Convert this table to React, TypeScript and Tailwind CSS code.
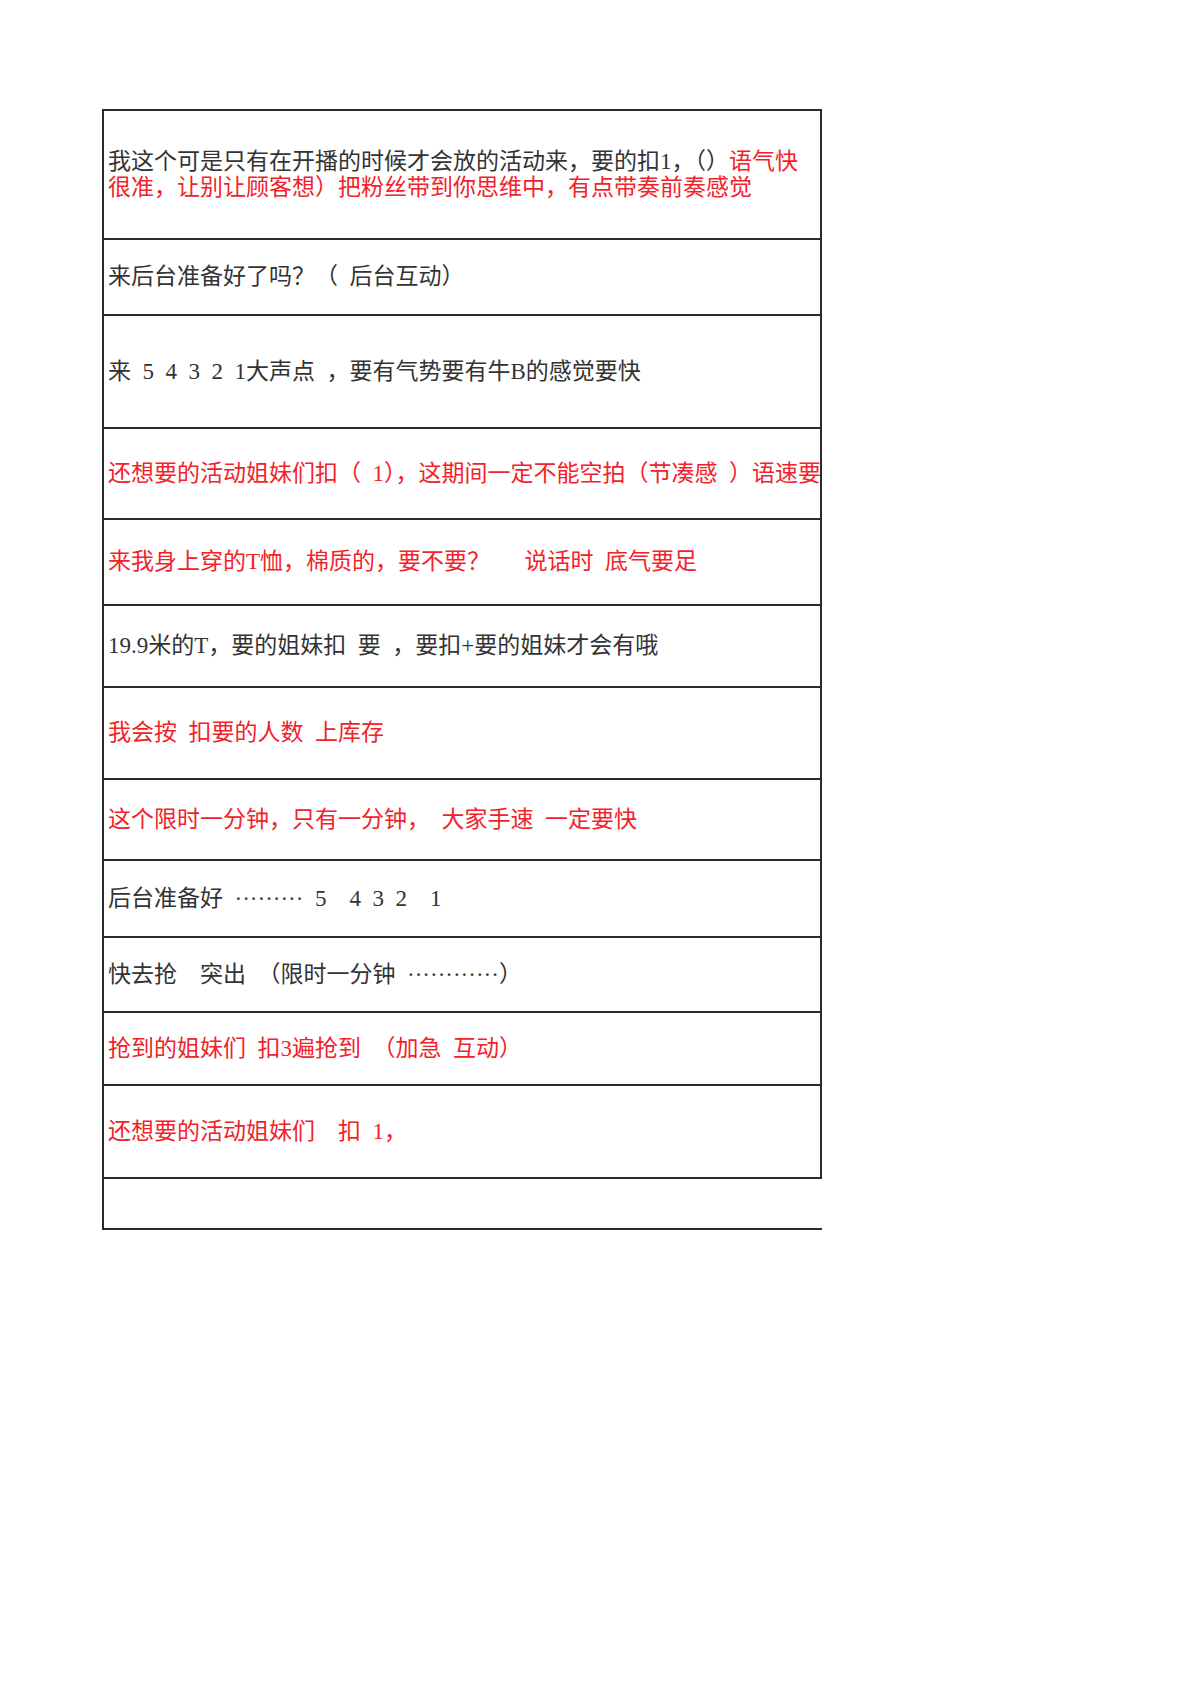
const rows: { h: string; parts: { t: string; red?: boolean }[]; clip?: boolean }[] = [
  {
    h: 'h-[129px]',
    parts: [
      { t: '我这个可是只有在开播的时候才会放的活动来，要的扣1，（）' },
      { t: '语气快很准，让别让顾客想）把粉丝带到你思维中，有点带奏前奏感觉', red: true },
    ],
  },
  { h: 'h-[76px]', parts: [{ t: '来后台准备好了吗？（ 后台互动）' }] },
  { h: 'h-[113px]', parts: [{ t: '来 5 4 3 2 1大声点 ，要有气势要有牛B的感觉要快' }] },
  {
    h: 'h-[91px]',
    clip: true,
    parts: [{ t: '还想要的活动姐妹们扣（ 1），这期间一定不能空拍（节凑感 ）语速要快', red: true }],
  },
  { h: 'h-[86px]', parts: [{ t: '来我身上穿的T恤，棉质的，要不要？   说话时 底气要足', red: true }] },
  { h: 'h-[82px]', parts: [{ t: '19.9米的T，要的姐妹扣 要 ，要扣+要的姐妹才会有哦' }] },
  { h: 'h-[92px]', parts: [{ t: '我会按 扣要的人数 上库存', red: true }] },
  { h: 'h-[81px]', parts: [{ t: '这个限时一分钟，只有一分钟， 大家手速 一定要快', red: true }] },
  { h: 'h-[77px]', parts: [{ t: '后台准备好 ········· 5  4 3 2  1' }] },
  { h: 'h-[75px]', parts: [{ t: '快去抢  突出 （限时一分钟 ············）' }] },
  { h: 'h-[73px]', parts: [{ t: '抢到的姐妹们 扣3遍抢到 （加急 互动）', red: true }] },
  { h: 'h-[93px]', parts: [{ t: '还想要的活动姐妹们  扣 1，', red: true }] },
];

export default function App() {
  return (
    <div
      className="min-h-[1698px] w-[1200px] bg-white pt-[109px] pl-[102px]"
      style={{ fontFamily: '"Liberation Serif", "Noto Sans CJK SC", serif' }}
    >
      <div className="flex w-[720px] flex-col">
        {rows.map((row, i) => (
          <div
            key={i}
            className={`flex ${row.h} items-center overflow-hidden border-x-2 border-t-2 border-[#2a2a2a] pl-[4px]`}
          >
            <p
              className={`text-[23px] leading-[26px] text-[#333333] [word-spacing:0.25em] ${
                row.clip ? 'whitespace-pre' : 'whitespace-pre-wrap'
              }`}
            >
              {row.parts.map((p, j) => (
                <span key={j} className={p.red ? 'text-[#f2222a]' : ''}>
                  {p.t}
                </span>
              ))}
            </p>
          </div>
        ))}
        {/* empty trailing row, no right edge */}
        <div className="h-[53px] border-y-2 border-l-2 border-[#2a2a2a]" />
      </div>
    </div>
  );
}
